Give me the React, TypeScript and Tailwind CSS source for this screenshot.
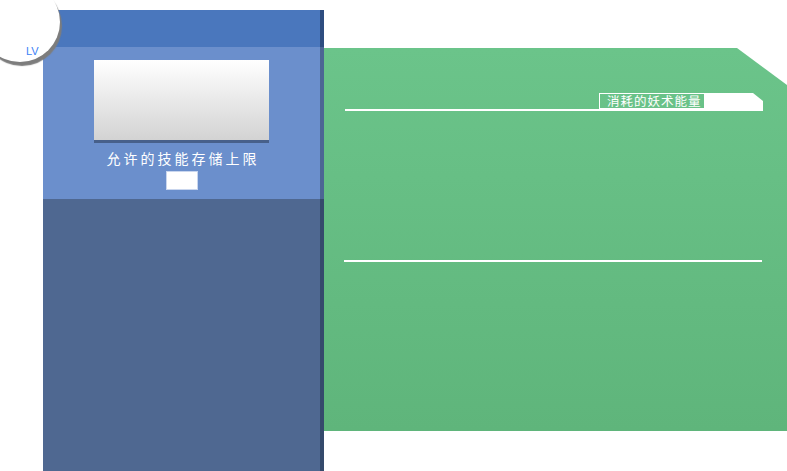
import React from "react";

const cjk = { fontFamily: '"Noto Sans CJK SC", "Noto Sans", sans-serif' };

export default function App() {
  return (
    <div className="relative w-[787px] h-[471px] overflow-hidden bg-white" style={cjk}>
      <div className="flex h-full">
        {/* LEFT PANEL */}
        <div className="ml-[43px] mt-[10px] w-[281px] flex flex-col">
          <div className="h-[37px] bg-[#4a77bd] border-r-[4px] border-[#2e4d80]" />
          <div className="h-[152px] bg-[#6b8fcc] border-r-[4px] border-[#4c6694] flex flex-col items-center">
            <div className="mt-[13px] w-[175px] h-[83px] border-b-[3px] border-[#47608a] bg-[linear-gradient(to_bottom,#ffffff,#d3d3d3)]" />
            <div className="mt-[6px] text-[14px] leading-[18px] tracking-[3px] pl-[3px] text-white">允许的技能存储上限</div>
            <div className="mt-[4px] w-[32px] h-[19px] bg-white border border-[#c9d6ee]" />
          </div>
          <div className="flex-1 bg-[#4f6891] border-r-[4px] border-[#354a6c]" />
        </div>

        {/* GREEN PANEL */}
        <div className="mt-[48px] h-[383px] flex-1 bg-[linear-gradient(to_bottom,#6bc48a,#5fb57b)] [clip-path:polygon(0_0,calc(100%-50px)_0,100%_37px,100%_100%,0_100%)] pl-[21px] pr-[24px] pt-[45px]">
          <div className="flex justify-end items-end">
            <div className="h-[16px] w-[106px] border border-white text-[12.5px] leading-[14px] tracking-[1px] text-white pl-[7px]">消耗的妖术能量</div>
            <div className="h-[16px] w-[58px] bg-white [clip-path:polygon(0_0,calc(100%-10px)_0,100%_8px,100%_100%,0_100%)]" />
          </div>
          <div className="h-[2px] bg-white" />
          <div className="mt-[149px] mr-[1px] -ml-[1px] h-[2px] bg-white" />
        </div>
      </div>

      {/* LV BADGE */}
      <div className="absolute left-[-20px] top-[-18px] w-[80px] h-[80px] rounded-full bg-white shadow-[2px_4px_1px_#7d7d7d]" />
      <div className="absolute left-[26px] top-[45px] text-[11px] leading-[12px] text-[#3b82f6]" style={{ fontFamily: '"Liberation Sans", sans-serif' }}>LV</div>
    </div>
  );
}
